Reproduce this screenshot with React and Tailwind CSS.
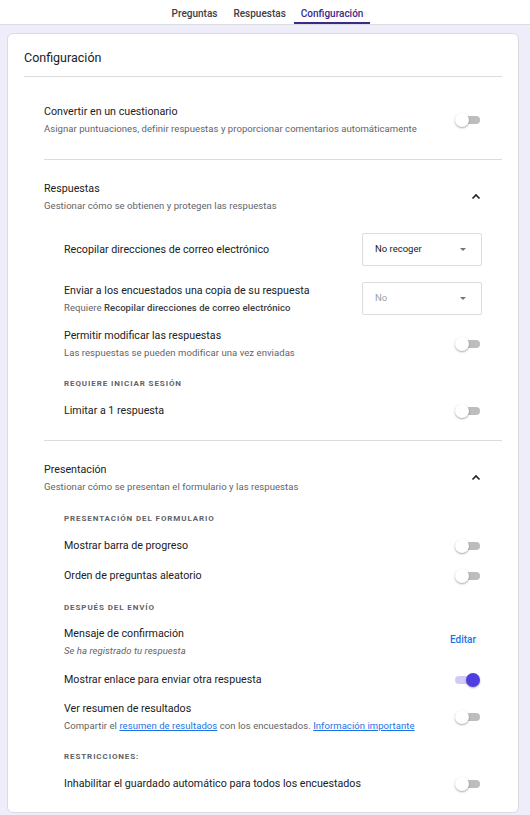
import React from "react";

const Toggle = ({ on = false }) => (
  <div className="relative h-[14px] w-[25px] shrink-0">
    <div
      className={`absolute top-[3px] h-[8px] w-[22px] rounded-full ${
        on ? "left-0 bg-[#d1ccf6]" : "right-0 bg-[#bdbdbd]"
      }`}
    />
    <div
      className={`absolute top-0 h-[14px] w-[14px] rounded-full ${
        on
          ? "right-0 bg-[#4f3fe0] shadow-[0_1px_2px_rgba(0,0,0,0.3)]"
          : "left-0 bg-white shadow-[0_1px_2px_rgba(0,0,0,0.35)]"
      }`}
    />
  </div>
);

const ChevronUp = () => (
  <svg width="12" height="12" viewBox="0 0 12 12" className="shrink-0">
    <path d="M2.5 7.5 L6 4 L9.5 7.5" fill="none" stroke="#202124" strokeWidth="1.6" />
  </svg>
);

const Dropdown = ({ value, disabled }) => (
  <div className="flex h-[33px] w-[120px] shrink-0 items-center justify-between rounded-[2px] border border-[#dadce0] pl-[12px] pr-[15px]">
    <span className={`text-[9.5px] ${disabled ? "text-[#9aa0a6]" : "text-[#202124]"}`}>{value}</span>
    <svg width="6" height="3" viewBox="0 0 6 3">
      <path d="M0 0 L6 0 L3 3 Z" fill="#757575" />
    </svg>
  </div>
);

const Title = ({ children }) => (
  <div className="h-[16px] text-[10.7px] leading-[16px] text-[#202124]">{children}</div>
);

const Sub = ({ children, italic }) => (
  <div
    className={`mt-[2px] h-[14px] text-[9.5px] leading-[14px] tracking-[0.06px] text-[#5f6368] ${
      italic ? "italic" : ""
    }`}
  >
    {children}
  </div>
);

const Label = ({ children, className = "" }) => (
  <div className={`h-[12px] text-[8px] font-bold leading-[12px] tracking-[0.9px] text-[#5f6368] ${className}`}>
    {children}
  </div>
);

const ToggleRow = ({ title, sub, on, className = "" }) => (
  <div className={`flex items-center justify-between pr-[22px] ${className}`}>
    <div>
      <Title>{title}</Title>
      {sub && <Sub>{sub}</Sub>}
    </div>
    <Toggle on={on} />
  </div>
);

export default function App() {
  return (
    <div className="min-h-[815px] bg-[#efedf9] font-[Roboto,'Liberation_Sans',sans-serif]">
      {/* tabs */}
      <div className="flex h-[25px] justify-center border-b border-[#dadce0] bg-white pl-[4px]">
        <div className="px-[8px] pt-[6px] text-[10px] font-medium text-[#3c4043]">Preguntas</div>
        <div className="px-[8px] pt-[6px] text-[10px] font-medium text-[#3c4043]">Respuestas</div>
        <div className="border-b-[2px] border-[#3b2a8c] px-[7px] pt-[6px] text-[10px] font-medium text-[#3b2a8c]">
          Configuración
        </div>
      </div>

      <div className="ml-[7px] mr-[11px] mt-[8px] rounded-[6px] border border-[#dadce0] bg-white px-[16px] pb-[20px]">
        <div className="flex h-[43px] items-center border-b border-[#dadce0] pt-[6px] text-[12.5px] text-[#202124]">
          Configuración
        </div>

        {/* cuestionario */}
        <div className="ml-[20px] border-b border-[#dadce0] pb-[23px] pt-[27px]">
          <ToggleRow
            title="Convertir en un cuestionario"
            sub="Asignar puntuaciones, definir respuestas y proporcionar comentarios automáticamente"
          />
        </div>

        {/* respuestas */}
        <div className="ml-[20px] border-b border-[#dadce0] pb-[21px] pt-[21px]">
          <div className="flex items-center justify-between pr-[20px]">
            <div>
              <Title>Respuestas</Title>
              <Sub>Gestionar cómo se obtienen y protegen las respuestas</Sub>
            </div>
            <ChevronUp />
          </div>

          <div className="pl-[20px]">
            <div className="mt-[20px] flex items-center justify-between pr-[20px]">
              <Title>Recopilar direcciones de correo electrónico</Title>
              <Dropdown value="No recoger" />
            </div>

            <div className="mt-[16px] flex items-start justify-between pr-[20px]">
              <div className="pt-[1px]">
                <Title>Enviar a los encuestados una copia de su respuesta</Title>
                <Sub>
                  Requiere <span className="font-medium text-[#3c4043]">Recopilar direcciones de correo electrónico</span>
                </Sub>
              </div>
              <Dropdown value="No" disabled />
            </div>

            <ToggleRow
              className="mt-[13px]"
              title="Permitir modificar las respuestas"
              sub="Las respuestas se pueden modificar una vez enviadas"
            />

            <Label className="mt-[18px]">REQUIERE INICIAR SESIÓN</Label>

            <ToggleRow className="mt-[13px]" title="Limitar a 1 respuesta" />
          </div>
        </div>

        {/* presentación */}
        <div className="ml-[20px] pt-[21px]">
          <div className="flex items-center justify-between pr-[20px]">
            <div>
              <Title>Presentación</Title>
              <Sub>Gestionar cómo se presentan el formulario y las respuestas</Sub>
            </div>
            <ChevronUp />
          </div>

          <div className="pl-[20px]">
            <Label className="mt-[19px]">PRESENTACIÓN DEL FORMULARIO</Label>
            <ToggleRow className="mt-[13px]" title="Mostrar barra de progreso" />
            <ToggleRow className="mt-[14px]" title="Orden de preguntas aleatorio" />

            <Label className="mt-[18px]">DESPUÉS DEL ENVÍO</Label>
            <div className="mt-[12px] flex items-center justify-between pr-[26px]">
              <div>
                <Title>Mensaje de confirmación</Title>
                <Sub italic>Se ha registrado tu respuesta</Sub>
              </div>
              <span className="mb-[6px] text-[10px] font-medium text-[#1a73e8]">Editar</span>
            </div>
            <ToggleRow className="mt-[14px]" title="Mostrar enlace para enviar otra respuesta" on />
            <ToggleRow
              className="mt-[13px]"
              title="Ver resumen de resultados"
              sub={
                <>
                  Compartir el <span className="text-[#1a73e8] underline">resumen de resultados</span> con los
                  encuestados. <span className="text-[#1a73e8] underline">Información importante</span>
                </>
              }
            />

            <Label className="mt-[18px]">RESTRICCIONES:</Label>
            <ToggleRow className="mt-[13px]" title="Inhabilitar el guardado automático para todos los encuestados" />
          </div>
        </div>
      </div>
    </div>
  );
}
